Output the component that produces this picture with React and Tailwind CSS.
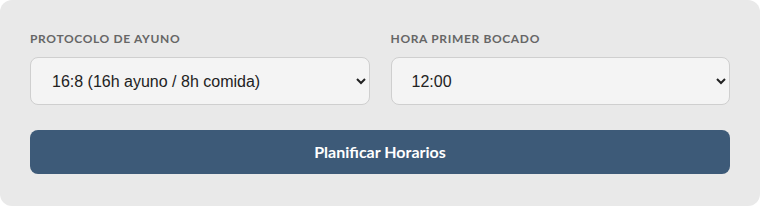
import React, { useState } from 'react';

const App = () => {
  const [protocol, setProtocol] = useState('16:8');
  const [firstMeal, setFirstMeal] = useState('12:00');

  return (
    <div className="w-[760px] h-[206px] bg-white">
      <div className="h-full rounded-xl bg-[#e9e9e9] px-[30px] pt-[31px] font-['Lato',sans-serif]">
        <div className="grid grid-cols-2 gap-[21px]">
          <div>
            <label className="block text-[12px] font-bold uppercase tracking-[0.65px] text-[#666] leading-[16px] mb-[10px]">
              Protocolo de Ayuno
            </label>
            <select
              value={protocol}
              onChange={(e) => setProtocol(e.target.value)}
              className="block w-full h-[48px] pl-[17px] pr-2 rounded-lg border border-[#cfcfcf] bg-[#f4f4f4] text-[16px] text-[#222] font-['Liberation_Sans',Arial,sans-serif]"
            >
              <option value="16:8">16:8 (16h ayuno / 8h comida)</option>
              <option value="18:6">18:6 (18h ayuno / 6h comida)</option>
              <option value="20:4">20:4 (20h ayuno / 4h comida)</option>
            </select>
          </div>
          <div>
            <label className="block text-[12px] font-bold uppercase tracking-[0.65px] text-[#666] leading-[16px] mb-[10px]">
              Hora Primer Bocado
            </label>
            <select
              value={firstMeal}
              onChange={(e) => setFirstMeal(e.target.value)}
              className="block w-full h-[48px] pl-[16px] pr-2 rounded-lg border border-[#cfcfcf] bg-[#f4f4f4] text-[16px] text-[#222] font-['Liberation_Sans',Arial,sans-serif]"
            >
              <option value="10:00">10:00</option>
              <option value="12:00">12:00</option>
              <option value="14:00">14:00</option>
            </select>
          </div>
        </div>
        <button className="mt-[25px] w-full h-[44px] rounded-lg bg-[#3d5a78] text-white text-[16px] font-bold">
          Planificar Horarios
        </button>
      </div>
    </div>
  );
};

export default App;
